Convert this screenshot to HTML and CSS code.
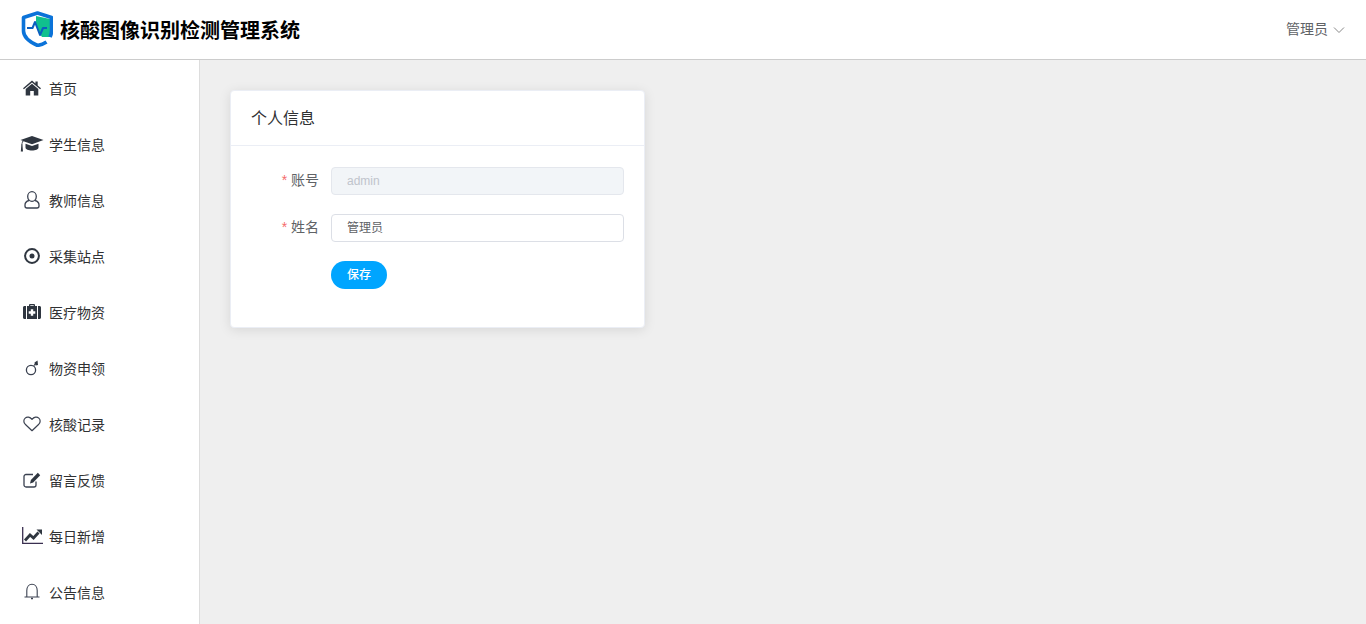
FILE: index.html
```html
<!DOCTYPE html>
<html lang="zh-CN">
<head>
<meta charset="utf-8">
<title>核酸图像识别检测管理系统</title>
<link rel="stylesheet" href="styles.css">
</head>
<body>
<header class="topbar">
  <div class="brand">
    <svg class="logo" viewBox="0 0 32 36" width="32" height="36">
      <path d="M15 5 L29 8 V26 L21 26 L19 23 L15 14 Z" fill="#10c08e"/>
      <path d="M25.500 31 C22.500 33 19 34 16.500 34.500 C10 31.500 2.500 27 2.500 20 V6.500 L16.500 2 L30.500 6.500 V20 C30.500 22 30 24 29 26" fill="none" stroke="#0b73d9" stroke-width="3.600" stroke-linejoin="round"/>
      <path d="M6 17 H11.500 L14 11 L19 24 L22 17 H26" fill="none" stroke="#0b5fc0" stroke-width="2" stroke-linejoin="round"/>
    </svg>
    <span class="brand-title">核酸图像识别检测管理系统</span>
  </div>
  <div class="user">
    <span class="user-name">管理员</span>
    <svg class="caret" viewBox="0 0 12 8" width="12" height="8"><path d="M1 1.500 L6 6.500 L11 1.500" fill="none" stroke="#888" stroke-width="1"/></svg>
  </div>
</header>
<div class="body-row">
  <nav class="sidebar">
    <a class="item"><span class="ico"><svg viewBox="0 0 18 16" width="18" height="16"><path fill="#2f3640" d="M9 .5 12.400 3.400V1.600h2.300v3.800L18 8.200l-.9 1L9 2.400.9 9.200 0 8.200zM9 3.800l6.300 5.300V15.500h-4.500v-4.500H7.200v4.500H2.700V9.100z"/></svg></span><span>首页</span></a>
    <a class="item"><span class="ico"><svg viewBox="0 0 24 16" width="24" height="16"><path fill="#2f3640" d="M12 0 23.500 4 12 8.200 3.500 5.200C2.700 6 2.400 7 2.300 8.300 2.700 8.500 2.800 9 2.500 9.400L3 15.500H.8L1.300 9.400C1 9 1.100 8.500 1.500 8.300 1.600 6.800 2 5.700 2.700 4.800L.5 4zM5.500 7.800 12 10l6.500-2.200V11.500C18.500 13.500 15.500 14.500 12 14.500S5.500 13.500 5.500 11.500z"/></svg></span><span>学生信息</span></a>
    <a class="item"><span class="ico"><svg viewBox="0 0 16 18" width="16" height="18"><g fill="none" stroke="#3a4150" stroke-width="1.300"><ellipse cx="8" cy="5.500" rx="4.300" ry="4.800"/><path d="M5 9.500C2.500 10.200 1 11.800 1 14V15C1 16.200 2 17 3 17H13C14 17 15 16.200 15 15V14C15 11.800 13.500 10.200 11 9.500"/></g></svg></span><span>教师信息</span></a>
    <a class="item"><span class="ico"><svg viewBox="0 0 16 16" width="16" height="16"><circle cx="8" cy="8" r="6.900" fill="none" stroke="#2f3640" stroke-width="2"/><circle cx="8" cy="8" r="2.500" fill="#2f3640"/></svg></span><span>采集站点</span></a>
    <a class="item"><span class="ico"><svg viewBox="0 0 18 15" width="18" height="15"><path fill="#2f3640" d="M6 2V1.200C6 .5 6.500 0 7.200 0h3.600C11.500 0 12 .5 12 1.200V2H14V15H4V2zM7.300 2h3.400V1.300H7.300zM0 3.500C0 2.700.7 2 1.500 2H3V15H1.500C.7 15 0 14.300 0 13.500zM15 2h1.500C17.300 2 18 2.700 18 3.500v10C18 14.300 17.300 15 16.500 15H15z"/><path fill="#fff" d="M7.800 5.200h2.400v2.100h2.100v2.400h-2.100v2.100H7.800V9.700H5.700V7.300h2.100z"/></svg></span><span>医疗物资</span></a>
    <a class="item"><span class="ico"><svg viewBox="0 0 14 16" width="14" height="16"><circle cx="6" cy="10" r="4.600" fill="none" stroke="#3a4150" stroke-width="1.300"/><path d="M8.800 6 10.500 3" stroke="#3a4150" stroke-width="1"/><path d="M9.500 2.500 12.500 .6 13 5 10.500 5.500z" fill="#2f3640"/></svg></span><span>物资申领</span></a>
    <a class="item"><span class="ico"><svg viewBox="0 0 18 16" width="18" height="16"><path d="M9 14.700 2.200 8.200C.3 6.300.5 3.600 2.200 2.100 4 .5 7 .8 9 3.400 11 .8 14 .5 15.800 2.100 17.500 3.600 17.700 6.300 15.800 8.200z" fill="none" stroke="#3a4150" stroke-width="1.200" stroke-linejoin="round"/></svg></span><span>核酸记录</span></a>
    <a class="item"><span class="ico"><svg viewBox="0 0 18 16" width="18" height="16"><path d="M13 9.500V13C13 14.100 12.100 15 11 15H3C1.900 15 1 14.100 1 13V4.500C1 3.400 1.900 2.500 3 2.500H10" fill="none" stroke="#3a4150" stroke-width="1.300"/><path fill="#2f3640" d="M14.800 0.800 17.200 3.200 10.200 10.400 7 11.400 7.900 8z"/></svg></span><span>留言反馈</span></a>
    <a class="item"><span class="ico"><svg viewBox="0 0 21 17" width="21" height="17"><path d="M.7 0V16.300H21" fill="none" stroke="#3a2f50" stroke-width="1.300"/><path d="M3 13.500 8 8 11.500 11 16.500 5.500" fill="none" stroke="#2f3640" stroke-width="2.800"/><path fill="#2f3640" d="M14.500 2.500H20V8z"/></svg></span><span>每日新增</span></a>
    <a class="item"><span class="ico"><svg viewBox="0 0 16 17" width="16" height="17"><path d="M.5 14H15.500M2.800 14V7.500C2.800 3.800 5 1.300 8 1.300S13.200 3.800 13.200 7.500V14" fill="none" stroke="#3a4150" stroke-width="1.100"/><path d="M7 15.500H9" stroke="#3a4150" stroke-width="1.500"/></svg></span><span>公告信息</span></a>
  </nav>
  <main class="content">
    <section class="card">
      <h2 class="card-head">个人信息</h2>
      <form class="card-body">
        <div class="row">
          <label class="label"><i class="star">*</i> 账号</label>
          <input class="input input-disabled" value="admin" disabled>
        </div>
        <div class="row">
          <label class="label"><i class="star">*</i> 姓名</label>
          <input class="input input-cjk" value="管理员">
        </div>
        <div class="row">
          <button class="save" type="button">保存</button>
        </div>
      </form>
    </section>
  </main>
</div>
</body>
</html>
```
FILE: styles.css
```css
* { box-sizing: border-box; }
html, body { margin: 0; height: 100%; overflow: hidden; }
body {
  font-family: "Liberation Sans", "Noto Sans CJK SC", sans-serif;
  color: #303133;
  background: #efefef;
}
.topbar {
  height: 60px;
  background: #fff;
  border-bottom: 1px solid #ccc;
  display: flex;
  align-items: center;
  justify-content: space-between;
  padding: 0 21px;
}
.brand { display: flex; align-items: center; gap: 7px; }
.logo { display: block; margin-top: -1px; }
.brand-title { font-size: 20px; font-weight: 700; color: #000; line-height: 28px; margin-top: 2px; }
.user { display: flex; align-items: center; gap: 5px; font-size: 14px; color: #606266; }
.user-name { padding-bottom: 3px; }
.caret { display: block; }
.body-row { display: flex; height: 564px; }
.sidebar {
  width: 200px;
  background: #fff;
  border-right: 1px solid #ddd;
  padding-top: 1px;
  flex: none;
}
.item {
  height: 56px;
  display: flex;
  align-items: center;
  font-size: 14px;
  color: #303133;
  padding: 0 0 2px 19px;
  gap: 4px;
}
.ico { width: 26px; display: flex; justify-content: center; margin-top: -1px; }
.ico svg { display: block; }
.content { flex: 1; padding: 30px; }
.card {
  width: 415px;
  height: 238px;
  background: #fff;
  border: 1px solid #ebeef5;
  border-radius: 4px;
  box-shadow: 0 2px 12px rgba(0, 0, 0, .1);
}
.card-head {
  margin: 0;
  height: 55px;
  line-height: 56px;
  padding-left: 20px;
  font-size: 16px;
  font-weight: 400;
  color: #303133;
  border-bottom: 1px solid #ebeef5;
}
.card-body { padding: 21px 20px 0 0; }
.row { display: flex; align-items: center; height: 28px; margin-bottom: 19px; padding-left: 100px; position: relative; }
.label {
  position: absolute;
  left: 0;
  top: 3px;
  width: 88px;
  text-align: right;
  font-size: 14px;
  line-height: 20px;
  color: #606266;
}
.star { color: #f56c6c; font-style: normal; }
.input {
  width: 293px;
  height: 28px;
  border: 1px solid #dcdfe6;
  border-radius: 4px;
  padding: 0 15px;
  font: 12px "Liberation Sans", "Noto Sans CJK SC", sans-serif;
  color: #606266;
  background: #fff;
  outline: none;
}
.input-cjk { padding-bottom: 3px; }
.input-disabled { background: #f2f5f8; border-color: #e4e7ed; color: #c0c4cc; }
.save {
  width: 56px;
  height: 28px;
  border: 0;
  border-radius: 14px;
  background: #00a5ff;
  color: #fff;
  font: 500 12px "Liberation Sans", "Noto Sans CJK SC", sans-serif;
  padding: 0 0 3px;
}
```
